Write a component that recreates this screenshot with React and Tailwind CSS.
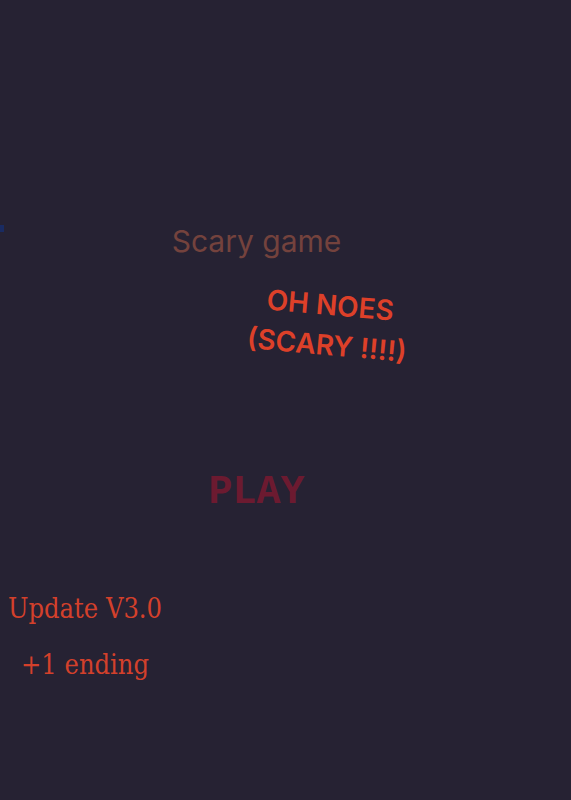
const updateNotes = ["Update V3.0", "+1 ending"];

const Title = () => (
  <h1 className="text-center font-['Inter',sans-serif] text-[30px] leading-10 text-[#74423d]">
    Scary game
  </h1>
);

const Tagline = () => (
  <p className="ml-[144px] mt-6 rotate-5 text-center font-['Inter',sans-serif] text-[28px] font-semibold leading-10 text-[#dd4029]">
    OH NOES
    <br />
    (SCARY !!!!)
  </p>
);

const PlayButton = () => (
  <button
    type="button"
    className="mt-[104px] cursor-pointer self-center font-['Liberation_Mono'] text-[40px] font-bold leading-12 text-[#6c1a30] hover:text-[#a02040]"
  >
    PLAY
  </button>
);

const UpdateNotes = () => (
  <section className="mt-16 w-fit pl-2 text-center font-['DejaVu_Serif_Condensed','DejaVu_Serif',serif] text-[27px] leading-14 text-[#d3402b]">
    {updateNotes.map((note) => (
      <p key={note}>{note}</p>
    ))}
  </section>
);

const App = () => {
  return (
    <main className="relative flex min-h-screen flex-col overflow-x-hidden bg-[#262233] pb-8 pt-[221px]">
      <span className="absolute left-0 top-[225px] h-[7px] w-1 bg-[#192b62]" />

      <div className="flex flex-col pr-[58px]">
        <Title />
        <Tagline />
        <PlayButton />
      </div>
      <UpdateNotes />
    </main>
  );
};

export default App;
